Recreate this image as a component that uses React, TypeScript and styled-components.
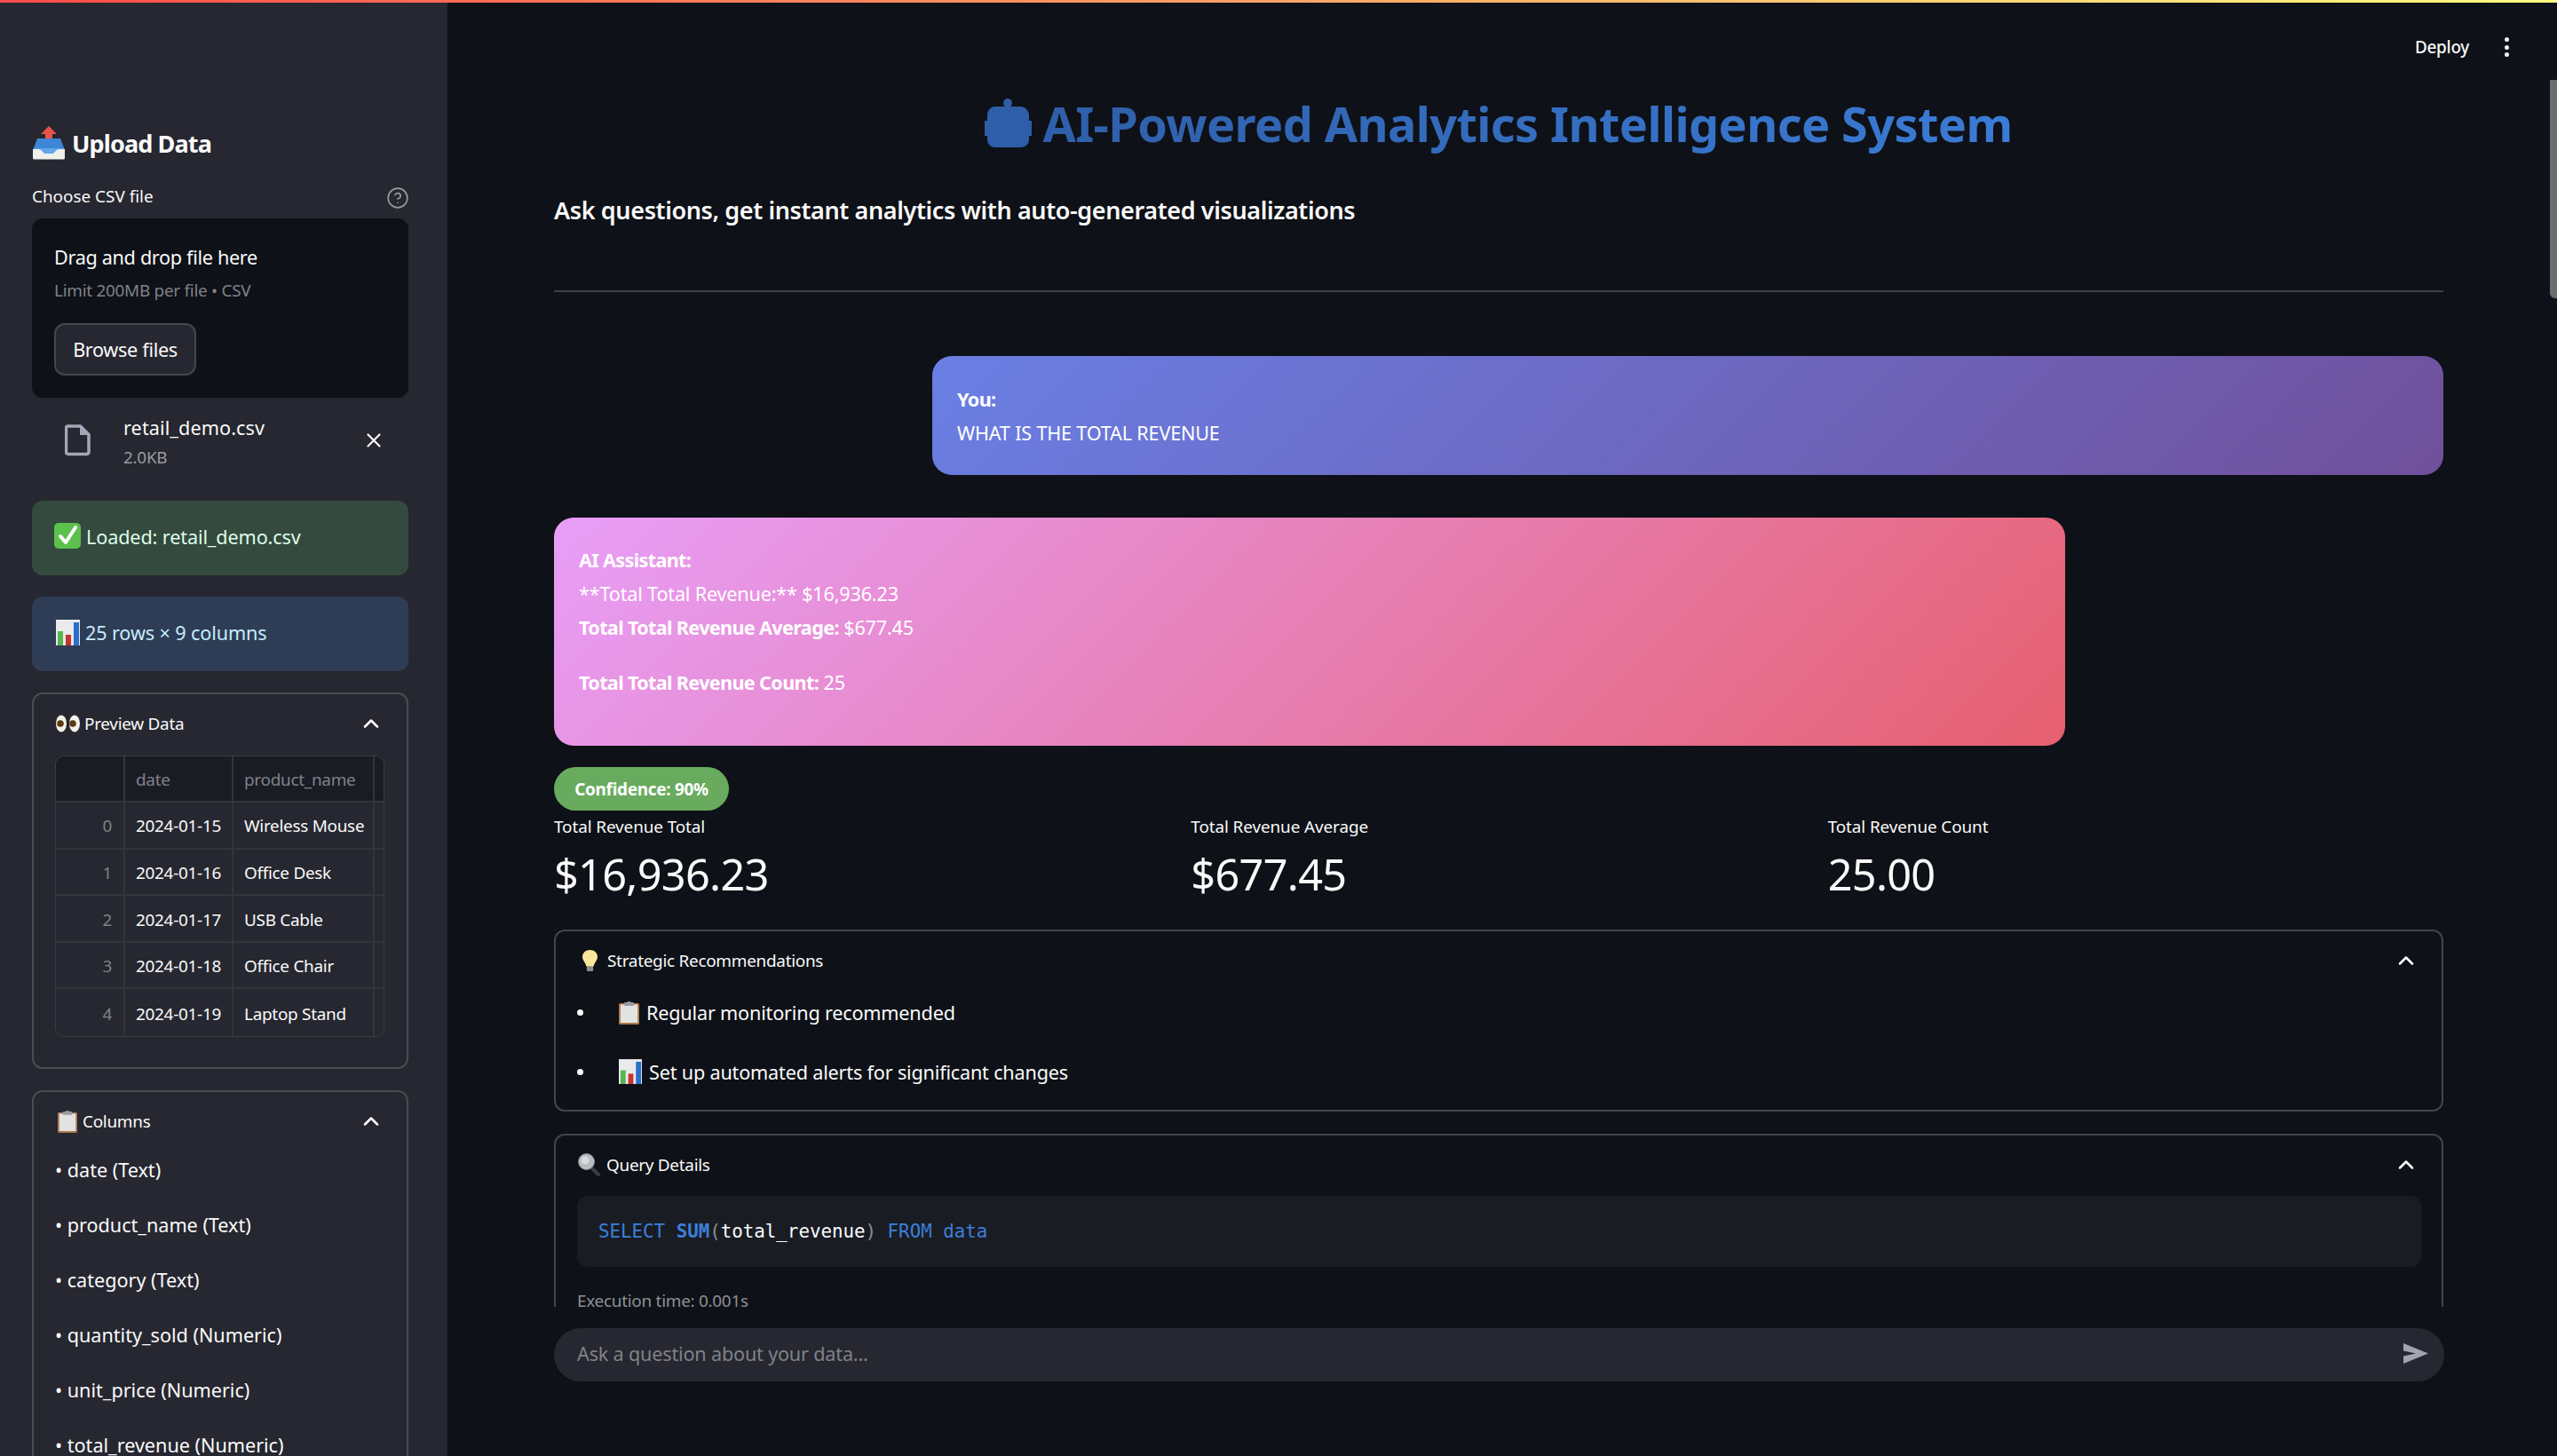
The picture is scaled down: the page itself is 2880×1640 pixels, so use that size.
import React from "react";
import styled, { createGlobalStyle } from "styled-components";
import { ChevronUp, CircleHelp, X } from "lucide-react";

const Global = createGlobalStyle`
  html, body { margin: 0; padding: 0; background: #0e1117; }
  body { font-family: "Noto Sans", "Liberation Sans", sans-serif; font-weight: 450; color: #fafafa; overflow: hidden; }
  * { box-sizing: border-box; letter-spacing: -0.014em; }
`;

const App_ = styled.div`
  position: relative;
  display: flex;
  width: 2880px;
  height: 1640px;
  overflow: hidden;
  background: #0e1117;
`;
const TopLine = styled.div`
  position: absolute;
  inset: 0 0 auto 0;
  height: 3px;
  background: linear-gradient(90deg, #ff4b4b, #fffd80);
`;
const ScrollThumb = styled.div`
  position: absolute;
  right: 0;
  top: 90px;
  width: 8px;
  height: 246px;
  background: #6b6c71;
  border-radius: 0 0 0 6px;
`;

/* Sidebar */
const Sidebar = styled.aside`
  flex: 0 0 504px;
  height: 1640px;
  overflow: hidden;
  background: #262730;
  padding: 139px 44px 0 36px;
`;
const SideHeading = styled.h3`
  display: flex;
  align-items: center;
  gap: 7px;
  height: 44px;
  margin: 0;
  font-size: 27px;
  font-weight: 700;
  letter-spacing: -0.032em;
`;
const LabelRow = styled.div`
  display: flex;
  align-items: center;
  justify-content: space-between;
  height: 30px;
  margin-top: 23px;
  font-size: 18.9px;
  letter-spacing: 0;
  color: #fafafa;
  svg { color: #9a9ba1; margin: 4px -1px 0 0; }
`;
const Dropzone = styled.div`
  margin-top: 10px;
  height: 201.5px;
  padding: 24px 25px;
  background: #0e1117;
  border-radius: 12px;
`;
const DropTitle = styled.div`
  font-size: 21.6px;
  line-height: 40px;
  height: 40px;
`;
const DropHint = styled.div`
  font-size: 18.9px;
  line-height: 30px;
  margin-top: 2px;
  color: #808289;
`;
const Browse = styled.button`
  display: block;
  width: 160px;
  height: 59px;
  margin-top: 22px;
  padding: 0;
  background: #262730;
  border: 2px solid #45464e;
  border-radius: 12px;
  color: #fafafa;
  font: 450 21.6px "Noto Sans", sans-serif;
`;
const FileRow = styled.div`
  display: flex;
  align-items: center;
  height: 71px;
  margin-top: 13px;
  padding-left: 37px;
  padding-right: 26px;
`;
const FileText = styled.div`
  margin: 3px 0 0 37px;
  flex: 1;
`;
const FileName = styled.div`
  font-size: 21.6px;
  line-height: 32px;
  letter-spacing: 0.005em;
`;
const FileSize = styled.div`
  font-size: 18.9px;
  line-height: 30px;
  margin-top: 2px;
  color: #9a9ba1;
`;
const Alert = styled.div<{ $bg: string; $fg: string; $top: number; $pad: number }>`
  display: flex;
  align-items: center;
  gap: 6px;
  height: 84px;
  margin-top: ${(p) => p.$top}px;
  padding: 0 0 3px ${(p) => p.$pad}px;
  border-radius: 12px;
  background: ${(p) => p.$bg};
  color: ${(p) => p.$fg};
  font-size: 21.6px;
  letter-spacing: -0.005em;
`;
const Expander = styled.section<{ $gap: number }>`
  margin-top: ${(p) => p.$gap}px;
  border: 2px solid #4a4b53;
  border-radius: 12px;
`;
const ExpHead = styled.div<{ $left: number; $right: number; $gap?: number }>`
  display: flex;
  align-items: center;
  gap: ${(p) => p.$gap ?? 6}px;
  height: 66px;
  padding: 0 ${(p) => p.$right}px 0 ${(p) => p.$left}px;
  font-size: 18.9px;
  svg:last-child { margin-left: auto; }
`;
const PreviewBody = styled.div`
  margin: 3px 24px 34px 24px;
`;
const Table = styled.div`
  display: grid;
  grid-template-columns: 78px 122px 159px 1fr;
  grid-auto-rows: 52.6px;
  width: 371px;
  border: 1px solid #3a3b43;
  border-radius: 10px;
  overflow: hidden;
  font-size: 18.9px;
`;
const Cell = styled.div<{ $kind?: "head" | "index" }>`
  display: flex;
  align-items: center;
  justify-content: ${(p) => (p.$kind === "index" ? "flex-end" : "flex-start")};
  padding: ${(p) => (p.$kind === "index" ? "2px 13px 0 0" : "2px 0 0 12px")};
  white-space: nowrap;
  overflow: hidden;
  background: ${(p) => (p.$kind === "head" ? "#1a1c24" : "transparent")};
  color: ${(p) => (p.$kind ? "#808289" : "#fafafa")};
  border-right: 2px solid #33343c;
  border-bottom: 2px solid #33343c;
  &:nth-child(4n) { border-right: 0; }
  &:nth-last-child(-n + 4) { border-bottom: 0; }
`;
const ColList = styled.ul`
  list-style: none;
  margin: -9px 0 0;
  padding: 0 0 0 24px;
`;
const ColItem = styled.li`
  height: 62px;
  line-height: 62px;
  font-size: 21.6px;
  letter-spacing: 0;
`;

/* Main */
const Main = styled.main`
  flex: 1;
  min-width: 0;
  display: flex;
  flex-direction: column;
  height: 1640px;
`;
const ScrollArea = styled.div`
  height: 1472px;
  overflow: hidden;
`;
const TopBar = styled.header`
  display: flex;
  justify-content: flex-end;
  align-items: flex-start;
  height: 90px;
  padding: 32px 54px 0 0;
`;
const Deploy = styled.span`
  font-size: 18.9px;
  line-height: 42px;
  font-weight: 500;
`;
const Kebab = styled.span`
  display: flex;
  flex-direction: column;
  justify-content: center;
  align-items: center;
  gap: 3.5px;
  width: 6px;
  height: 42px;
  margin-left: 39px;
  i { display: block; width: 5px; height: 5px; border-radius: 50%; background: #f0f0f0; }
`;
const Content = styled.div`
  padding: 0 128px 0 120px;
`;
const TitleRow = styled.h1`
  display: flex;
  justify-content: center;
  align-items: center;
  gap: 12px;
  height: 100px;
  margin: 0;
  padding-bottom: 2px;
  font-size: 54px;
  font-weight: 700;
`;
const TitleText = styled.span`
  letter-spacing: -0.011em;
  background: linear-gradient(90deg, #2f5fa9, #3a7bd5);
  -webkit-background-clip: text;
  background-clip: text;
  color: transparent;
`;
const Subtitle = styled.h3`
  height: 46px;
  line-height: 46px;
  margin: 24px 0 0;
  font-size: 27px;
  font-weight: 600;
`;
const Divider = styled.hr`
  height: 2px;
  margin: 67px 0 0;
  border: 0;
  background: #404147;
`;
const Bubble = styled.div<{ $kind: "user" | "ai" }>`
  margin-top: ${(p) => (p.$kind === "user" ? "72px" : "48px")};
  margin-left: ${(p) => (p.$kind === "user" ? "426px" : "0")};
  margin-right: ${(p) => (p.$kind === "user" ? "0" : "426px")};
  height: ${(p) => (p.$kind === "user" ? "134px" : "257px")};
  padding: ${(p) => (p.$kind === "user" ? "30px 28px" : "29px 28px")};
  border-radius: 22px;
  font-size: 21.6px;
  line-height: 38px;
  color: #fff;
  background: ${(p) =>
    p.$kind === "user"
      ? "linear-gradient(135deg, #6a7fe4, #70509b)"
      : "linear-gradient(135deg, #e89ef8, #e6606f)"};
  b { letter-spacing: -0.03em; }
`;
const Line = styled.div<{ $mt?: number }>`
  margin-top: ${(p) => p.$mt ?? 0}px;
  white-space: nowrap;
  letter-spacing: -0.008em;
`;
const Pill = styled.div`
  display: flex;
  align-items: center;
  justify-content: center;
  width: 197px;
  height: 49px;
  margin-top: 24px;
  border-radius: 25px;
  background: #69ab5e;
  color: #fff;
  font-size: 18.9px;
  font-weight: 700;
`;
const Metrics = styled.div`
  display: grid;
  grid-template-columns: repeat(3, 1fr);
  gap: 24px;
  margin-top: 3px;
`;
const MetricLabel = styled.div`
  height: 30px;
  line-height: 30px;
  font-size: 18.9px;
  letter-spacing: -0.005em;
`;
const MetricValue = styled.div`
  height: 70px;
  line-height: 68px;
  margin-top: 4px;
  font-size: 48.6px;
`;
const MainExpander = styled.section<{ $gap: number }>`
  margin-top: ${(p) => p.$gap}px;
  border: 2px solid #44454b;
  border-radius: 12px;
`;
const Recs = styled.ul`
  list-style: none;
  margin: -8px 0 0;
  padding: 0 0 10px 24px;
`;
const Rec = styled.li<{ $h: number }>`
  display: flex;
  align-items: center;
  height: ${(p) => p.$h}px;
  font-size: 21.6px;
  letter-spacing: -0.008em;
  svg { margin-right: 8px; }
`;
const Bullet = styled.span`
  display: block;
  width: 7px;
  height: 7px;
  margin-right: 40px;
  border-radius: 50%;
  background: #fafafa;
`;
const Code = styled.pre`
  margin: 2px 23px 0 24px;
  height: 80px;
  padding: 0 24px;
  background: #1a1c24;
  border-radius: 12px;
  font: 400 20.8px/80px "DejaVu Sans Mono", monospace;
  color: #fafafa;
  &, & * { letter-spacing: 0; }
`;
const Kw = styled.span<{ $bold?: boolean }>`
  color: #3b80d8;
  font-weight: ${(p) => (p.$bold ? 700 : 400)};
`;
const Paren = styled.span`
  color: #8b8d93;
`;
const Exec = styled.div`
  margin: 24px 0 0 24px;
  height: 30px;
  line-height: 28px;
  font-size: 18.9px;
  color: #8f9095;
`;
const ChatBar = styled.div`
  display: flex;
  align-items: center;
  justify-content: space-between;
  height: 60px;
  margin: 24px 127px 0 120px;
  padding: 0 18px 3px 26px;
  border-radius: 30px;
  background: #262730;
  font-size: 21.6px;
  letter-spacing: -0.008em;
  color: #808289;
`;

/* Emoji drawings */
const Inbox = () => (
  <svg width="38" height="38" viewBox="0 0 38 38">
    <path d="M19 0 28 9h-5v9h-8V9h-5z" fill="#e8524a" />
    <path d="M6 14h26l5 13H1z" fill="#3d86d6" />
    <path d="M1 26h11c1 4 3 5 7 5s6-1 7-5h11v10a1.500 1.500 0 0 1-1.500 1.500h-33A1.500 1.500 0 0 1 1 36z" fill="#eeeeea" />
    <path d="M2 26c6-1 9 1 10 3 1 2 4 2 7 2s6 0 7-2c1-2 4-4 10-3l-1-1H3z" fill="#5ca8ea" />
  </svg>
);
const Check = () => (
  <svg width="30" height="30" viewBox="0 0 30 30">
    <rect x="0" y="0" width="30" height="29" rx="5" fill="#5cc04e" />
    <path d="M7 15l6 7L24 5" fill="none" stroke="#fff" strokeWidth="4" strokeLinecap="round" strokeLinejoin="round" />
  </svg>
);
const Bars = ({ s = 27 }: { s?: number }) => (
  <svg width={s} height={s + 2} viewBox="0 0 27 29">
    <rect width="27" height="29" fill="#e8eaec" />
    <rect x="2" y="13" width="6" height="16" fill="#57b552" />
    <rect x="11" y="17" width="6" height="12" fill="#c6352b" />
    <rect x="20" y="3" width="6" height="26" fill="#2a6fcb" />
  </svg>
);
const Eyes = () => (
  <svg width="27" height="20" viewBox="0 0 27 20">
    <ellipse cx="6" cy="10" rx="6" ry="9.500" fill="#f4f1ea" />
    <ellipse cx="21" cy="10" rx="6" ry="9.500" fill="#f4f1ea" />
    <circle cx="5" cy="10" r="3.800" fill="#5a3a14" />
    <circle cx="19" cy="10" r="3.800" fill="#5a3a14" />
  </svg>
);
const Clipboard = ({ w = 23, h = 26 }: { w?: number; h?: number }) => (
  <svg width={w} height={h} viewBox="0 0 23 26">
    <rect x="0" y="2" width="23" height="24" rx="1.500" fill="#a9774a" />
    <rect x="1.800" y="3.500" width="19.400" height="20.500" fill="#e2e2e2" />
    <rect x="6" y="1" width="11" height="4" rx="1" fill="#9a9ba1" />
    <rect x="9.500" y="0" width="4" height="3" rx="1" fill="#9a9ba1" />
  </svg>
);
const Bulb = () => (
  <svg width="17" height="24" viewBox="0 0 17 24">
    <path d="M8.500 0C3.500 0 0 3.400 0 7.800c0 4.200 3.600 6.400 4.600 11h7.800c1-4.600 4.600-6.800 4.600-11C17 3.400 13.500 0 8.500 0z" fill="#fbe69a" />
    <rect x="4.800" y="18.500" width="7.400" height="5.500" rx="1.500" fill="#8d8d8d" />
  </svg>
);
const Magnifier = () => (
  <svg width="26" height="26" viewBox="0 0 26 26">
    <path d="M15 16l8 8" stroke="#3a3a3e" strokeWidth="4" strokeLinecap="round" />
    <circle cx="9.500" cy="9.500" r="9" fill="#b9bdc2" stroke="#8a8c90" strokeWidth="1" />
    <circle cx="8" cy="8" r="4.500" fill="#d8dadd" />
  </svg>
);
const Robot = () => (
  <svg width="53" height="56" viewBox="0 0 53 56">
    <circle cx="26" cy="5" r="5" fill="#2f5ea8" />
    <path d="M12 9h28c5 0 10 4 10 10v6h3v17h-3v4c0 5-4 9-9 9H11c-4 0-8-4-8-9v-4H0V25h3v-6C3 13 7 9 12 9z" fill="#2f5ea8" />
  </svg>
);
const FileIcon = () => (
  <svg width="29" height="36" viewBox="0 0 29 36" fill="none">
    <path d="M3.500 2h14L27 11.500V31a2.500 2.500 0 0 1-2.500 2.500h-21A2.500 2.500 0 0 1 1.500 31V4a2 2 0 0 1 2-2z" stroke="#a3a8b8" strokeWidth="3.500" strokeLinejoin="round" />
    <path d="M17 2v10h10z" fill="#a3a8b8" />
  </svg>
);
const Send = () => (
  <svg width="28" height="23" viewBox="0 0 28 23">
    <path d="M0 0 28 11.500 0 23v-8.500L14 11.500 0 8.500z" fill="#a3a4b2" />
  </svg>
);

const rows = [
  ["0", "2024-01-15", "Wireless Mouse"],
  ["1", "2024-01-16", "Office Desk"],
  ["2", "2024-01-17", "USB Cable"],
  ["3", "2024-01-18", "Office Chair"],
  ["4", "2024-01-19", "Laptop Stand"],
];
const cols = [
  "date (Text)",
  "product_name (Text)",
  "category (Text)",
  "quantity_sold (Numeric)",
  "unit_price (Numeric)",
  "total_revenue (Numeric)",
];

export default function App() {
  return (
    <App_>
      <Global />
      <Sidebar>
        <SideHeading><Inbox />Upload Data</SideHeading>
        <LabelRow>Choose CSV file<CircleHelp size={26} strokeWidth={1.5} /></LabelRow>
        <Dropzone>
          <DropTitle>Drag and drop file here</DropTitle>
          <DropHint>Limit 200MB per file • CSV</DropHint>
          <Browse>Browse files</Browse>
        </Dropzone>
        <FileRow>
          <FileIcon />
          <FileText>
            <FileName>retail_demo.csv</FileName>
            <FileSize>2.0KB</FileSize>
          </FileText>
          <X size={26} strokeWidth={2} />
        </FileRow>
        <Alert $bg="#344a3e" $fg="#dffde9" $top={32} $pad={25}><Check />Loaded: retail_demo.csv</Alert>
        <Alert $bg="#2e3d55" $fg="#c7ebff" $top={24} $pad={27}><Bars />25 rows × 9 columns</Alert>
        <Expander $gap={24}>
          <ExpHead $left={25} $right={26} $gap={5}><Eyes />Preview Data<ChevronUp size={28} strokeWidth={2.2} /></ExpHead>
          <PreviewBody>
            <Table>
              <Cell $kind="head" />
              <Cell $kind="head">date</Cell>
              <Cell $kind="head">product_name</Cell>
              <Cell $kind="head" />
              {rows.map((r) => (
                <React.Fragment key={r[0]}>
                  <Cell $kind="index">{r[0]}</Cell>
                  <Cell>{r[1]}</Cell>
                  <Cell>{r[2]}</Cell>
                  <Cell />
                </React.Fragment>
              ))}
            </Table>
          </PreviewBody>
        </Expander>
        <Expander $gap={24}>
          <ExpHead $left={27} $right={26}><Clipboard w={22} h={25} />Columns<ChevronUp size={28} strokeWidth={2.2} /></ExpHead>
          <ColList>
            {cols.map((c) => <ColItem key={c}>• {c}</ColItem>)}
          </ColList>
        </Expander>
      </Sidebar>
      <Main>
        <ScrollArea>
          <TopBar>
            <Deploy>Deploy</Deploy>
            <Kebab><i /><i /><i /></Kebab>
          </TopBar>
          <Content>
            <TitleRow><Robot /><TitleText>AI-Powered Analytics Intelligence System</TitleText></TitleRow>
            <Subtitle>Ask questions, get instant analytics with auto-generated visualizations</Subtitle>
            <Divider />
            <Bubble $kind="user">
              <Line><b>You:</b></Line>
              <Line>WHAT IS THE TOTAL REVENUE</Line>
            </Bubble>
            <Bubble $kind="ai">
              <Line><b>AI Assistant:</b></Line>
              <Line>**Total Total Revenue:** $16,936.23</Line>
              <Line><b>Total Total Revenue Average:</b> $677.45</Line>
              <Line $mt={24}><b>Total Total Revenue Count:</b> 25</Line>
            </Bubble>
            <Pill>Confidence: 90%</Pill>
            <Metrics>
              <div><MetricLabel>Total Revenue Total</MetricLabel><MetricValue>$16,936.23</MetricValue></div>
              <div><MetricLabel>Total Revenue Average</MetricLabel><MetricValue>$677.45</MetricValue></div>
              <div><MetricLabel>Total Revenue Count</MetricLabel><MetricValue>25.00</MetricValue></div>
            </Metrics>
            <MainExpander $gap={27}>
              <ExpHead $left={30} $right={26} $gap={11}><Bulb />Strategic Recommendations<ChevronUp size={28} strokeWidth={2.2} /></ExpHead>
              <Recs>
                <Rec $h={67}><Bullet /><Clipboard />Regular monitoring recommended</Rec>
                <Rec $h={66}><Bullet /><Bars s={26} />Set up automated alerts for significant changes</Rec>
              </Recs>
            </MainExpander>
            <MainExpander $gap={25}>
              <ExpHead $left={25} $right={26}><Magnifier />Query Details<ChevronUp size={28} strokeWidth={2.2} /></ExpHead>
              <Code><Kw>SELECT</Kw> <Kw $bold>SUM</Kw><Paren>(</Paren>total_revenue<Paren>)</Paren> <Kw>FROM</Kw> <Kw>data</Kw></Code>
              <Exec>Execution time: 0.001s</Exec>
            </MainExpander>
          </Content>
        </ScrollArea>
        <ChatBar>Ask a question about your data...<Send /></ChatBar>
      </Main>
      <TopLine />
      <ScrollThumb />
    </App_>
  );
}
